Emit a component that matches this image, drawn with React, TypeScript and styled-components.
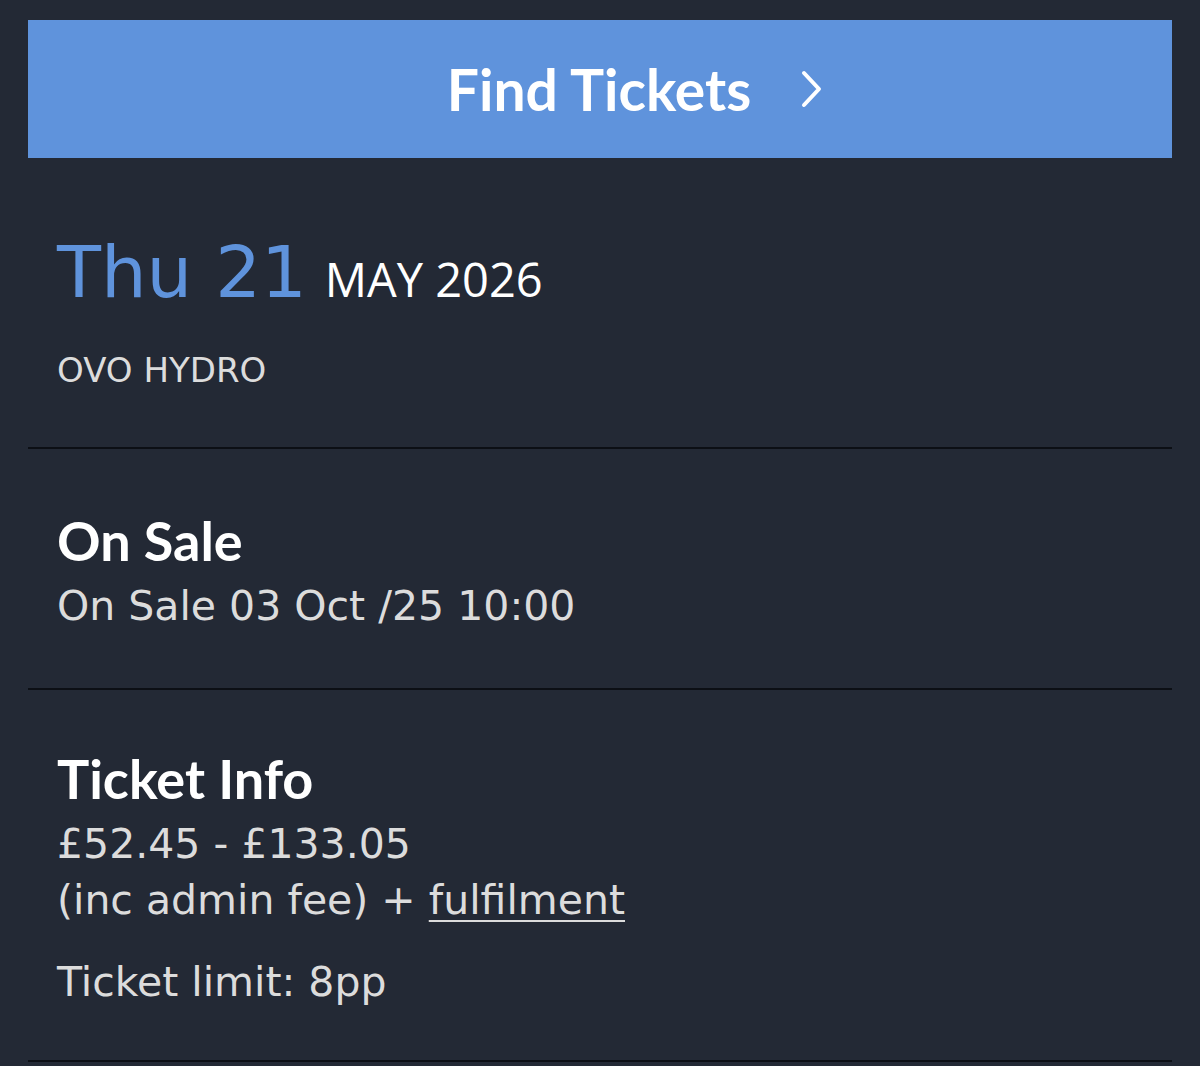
import * as React from "react";
import styled, {createGlobalStyle} from "styled-components";

const GlobalStyle = createGlobalStyle`
  html, body {
    margin: 0;
    padding: 0;
    background: #232935;
  }
  * {
    box-sizing: border-box;
  }
`

const Page = styled.div`
  min-height: 1066px;
  padding: 20px 28px 0;
  background: #232935;
  font-family: "DejaVu Sans", Verdana, sans-serif;
  color: #dcdcdc;
`

const FindButton = styled.button`
  width: 100%;
  height: 138px;
  border: none;
  background: #5f93dc;
  color: #ffffff;
  display: flex;
  align-items: center;
  justify-content: center;
  gap: 50px;
  font-family: "Lato", "Open Sans", sans-serif;
  font-weight: 700;
  font-size: 57px;
  padding: 0 0 0 70px;
  cursor: pointer;
`

const Section = styled.section<{ $pad: string }>`
  padding: ${p => p.$pad};
  border-bottom: 2px solid #0c0f15;
`

const DateLine = styled.div`
  display: flex;
  align-items: baseline;
  gap: 18px;
  line-height: 1;
`

const DayNum = styled.span`
  font-size: 72px;
  color: #5f93dc;
`

const MonthYear = styled.span`
  font-family: "Open Sans", sans-serif;
  font-weight: 500;
  font-size: 47px;
  color: #ffffff;
`

const Venue = styled.div`
  margin-top: 45px;
  font-size: 34px;
  line-height: 1;
  color: #dcdcdc;
`

const Heading = styled.h2`
  margin: 0;
  font-family: "Lato", "Open Sans", sans-serif;
  font-weight: 700;
  font-size: 54px;
  line-height: 74px;
  color: #ffffff;
`

const Text = styled.p<{ $top?: number }>`
  margin: ${p => p.$top ?? 0}px 0 0;
  font-size: 41px;
  line-height: 56px;
  color: #dcdcdc;
`

const Link = styled.a`
  color: inherit;
  text-decoration: underline;
  text-decoration-thickness: 2px;
  text-underline-offset: 6px;
`

function Chevron() {
    return (
        <svg width="22" height="38" viewBox="0 0 22 38" fill="none">
            <path d="M3 3 L18 19 L3 35" stroke="#ffffff" strokeWidth="4" strokeLinecap="round" strokeLinejoin="round"/>
        </svg>
    );
}

function App() {
    return (
        <Page>
            <GlobalStyle/>
            <FindButton>
                <span>Find Tickets</span>
                <Chevron/>
            </FindButton>

            <Section $pad="78px 29px 60px">
                <DateLine>
                    <DayNum>Thu 21</DayNum>
                    <MonthYear>MAY 2026</MonthYear>
                </DateLine>
                <Venue>OVO HYDRO</Venue>
            </Section>

            <Section $pad="55px 29px 54px">
                <Heading>On Sale</Heading>
                <Text>On Sale 03 Oct /25 10:00</Text>
            </Section>

            <Section $pad="52px 29px 50px">
                <Heading>Ticket Info</Heading>
                <Text>£52.45 - £133.05</Text>
                <Text>(inc admin fee) + <Link href="#">fulfilment</Link></Text>
                <Text $top={26}>Ticket limit: 8pp</Text>
            </Section>
        </Page>
    );
}

export default App;
